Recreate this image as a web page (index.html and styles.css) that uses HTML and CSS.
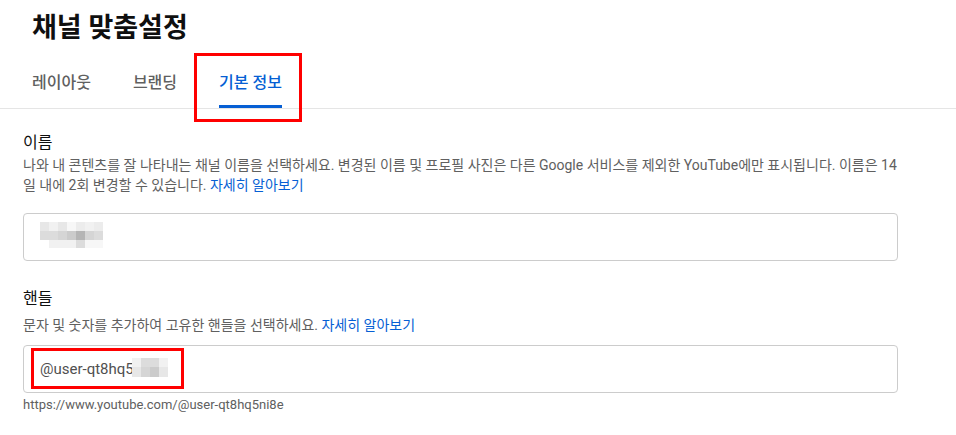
FILE: index.html
```html
<!DOCTYPE html>
<html lang="ko">
<head>
<meta charset="utf-8">
<title>채널 맞춤설정</title>
<link rel="stylesheet" href="styles.css">
</head>
<body>
<header class="page-header">
  <h1 class="title">채널 맞춤설정</h1>
  <nav class="tabs">
    <a class="tab">레이아웃</a>
    <a class="tab">브랜딩</a>
    <a class="tab tab--active">기본 정보<span class="mark mark--tab"></span></a>
  </nav>
</header>
<main class="content">
  <section class="group">
    <h2 class="label">이름</h2>
    <p class="help">나와 내 콘텐츠를 잘 나타내는 채널 이름을 선택하세요. 변경된 이름 및 프로필 사진은 다른 Google 서비스를 제외한 YouTube에만 표시됩니다. 이름은 14일 내에 2회 변경할 수 있습니다. <a class="link">자세히 알아보기</a></p>
    <div class="input input--name">
      <div class="mosaic mosaic--name">
        <span class="t4"></span><span class="t2"></span><span class="t4"></span><span class="t1"></span><span class="t3"></span><span class="t2"></span><span class="t3"></span>
        <span class="t5"></span><span class="t5"></span><span class="t6"></span><span class="t7"></span><span class="t8"></span><span class="t6"></span><span class="t5"></span>
        <span class="t0"></span><span class="t2"></span><span class="t2"></span><span class="t2"></span><span class="t5"></span><span class="t1"></span><span class="t1"></span>
      </div>
    </div>
  </section>
  <section class="group group--handle">
    <h2 class="label">핸들</h2>
    <p class="help">문자 및 숫자를 추가하여 고유한 핸들을 선택하세요. <a class="link">자세히 알아보기</a></p>
    <div class="input input--handle">
      <span class="value">@user-qt8hq5</span>
      <div class="mosaic mosaic--handle">
        <span class="t2"></span><span class="t5"></span><span class="t5"></span><span class="t2"></span>
        <span class="t4"></span><span class="t6"></span><span class="t7"></span><span class="t4"></span>
      </div>
      <span class="mark mark--input"></span>
    </div>
    <p class="url">https://www.youtube.com/@user-qt8hq5ni8e</p>
  </section>
</main>
</body>
</html>
```
FILE: styles.css
```css
html, body {
  margin: 0;
  padding: 0;
  background: #ffffff;
}

body {
  font-family: Roboto, "Noto Sans CJK KR", "Noto Sans", sans-serif;
  color: #0f0f0f;
  width: 956px;
}

.page-header {
  display: flex;
  flex-direction: column;
}

.title {
  margin: 0;
  padding: 12px 0 0 32px;
  font-size: 27px;
  line-height: 32px;
  font-weight: 700;
  color: #0f0f0f;
}

.tabs {
  display: flex;
  gap: 42px;
  padding-left: 32px;
  border-bottom: 1px solid #e5e5e5;
}

.tab {
  position: relative;
  padding: 29px 0 12px;
  font-size: 16px;
  line-height: 20px;
  font-weight: 500;
  color: #606060;
  border-bottom: 3px solid transparent;
}

.tab--active {
  color: #065fd4;
  border-bottom-color: #065fd4;
}

.mark {
  position: absolute;
  box-sizing: border-box;
  border: 3px solid #ff0000;
  pointer-events: none;
}

.mark--tab {
  left: -25px;
  right: -20px;
  top: 9px;
  bottom: -17px;
}

.content {
  padding: 22px 23px 0;
  max-width: 875px;
}

.group {
  display: flex;
  flex-direction: column;
}

.group--handle {
  padding-top: 26px;
}

.label {
  margin: 0;
  font-size: 16px;
  line-height: 24px;
  font-weight: 400;
  color: #0f0f0f;
}

.group--handle .label {
  margin-bottom: 4px;
}

.help {
  margin: 0;
  font-size: 14px;
  line-height: 20px;
  color: #606060;
}

.link {
  color: #065fd4;
}

.input {
  position: relative;
  box-sizing: border-box;
  height: 48px;
  margin-top: 18px;
  padding: 0 16px;
  border: 1px solid #cccccc;
  border-radius: 4px;
  display: flex;
  align-items: center;
}

.input--handle {
  margin-top: 10px;
}

.value {
  font-size: 15px;
  line-height: 24px;
  color: #505050;
}

.mosaic {
  display: grid;
}

.mosaic--name {
  grid-template-columns: repeat(7, 9px);
  grid-template-rows: 9px 9px 8px;
  margin-bottom: 4px;
}

.mosaic--handle {
  grid-template-columns: repeat(4, 9px);
  grid-template-rows: 9px 10px;
  margin-left: -2px;
  margin-bottom: 3px;
}

.mark--input {
  left: 7px;
  top: 2px;
  width: 153px;
  height: 41px;
}

.t0 { background: #ffffff; }
.t1 { background: #f7f7f7; }
.t2 { background: #f1f1f1; }
.t3 { background: #ececec; }
.t4 { background: #e7e7e7; }
.t5 { background: #dcdcdc; }
.t6 { background: #d5d5d5; }
.t7 { background: #cbcbcb; }
.t8 { background: #b5b5b5; }

.url {
  margin: 3px 0 0;
  font-size: 13px;
  line-height: 18px;
  color: #606060;
}
```
